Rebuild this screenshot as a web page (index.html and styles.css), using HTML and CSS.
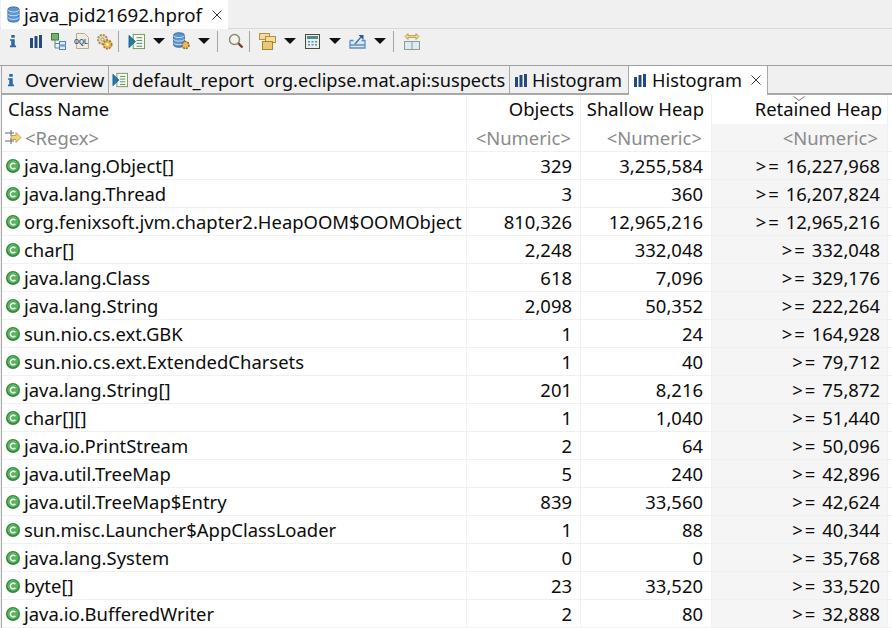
FILE: index.html
```html
<!DOCTYPE html>
<html lang="en">
<head>
    <meta charset="UTF-8">
    <meta name="viewport" content="width=device-width, initial-scale=1.0">
    <title>java_pid21692.hprof</title>
    <link rel="stylesheet" href="styles.css">
</head>
<body>
    <svg class="defs" width="0" height="0">
        <symbol id="i-info" viewBox="0 0 16 16">
            <path d="M6 1h4v3.200H6zM4.500 6h5.500v7.200h1.500V15h-7v-1.800H6V7.800H4.500z" fill="#2a6aa8"/>
        </symbol>
        <symbol id="i-bars" viewBox="0 0 12 13">
            <path d="M0 3h3v10H0zM4.500 1h3v12h-3zM9 0h3v13H9z" fill="#26497c"/>
        </symbol>
        <symbol id="i-class" viewBox="0 0 14 14">
            <circle cx="7" cy="7" r="7" fill="#2f8a3b"/>
            <circle cx="7" cy="6.600" r="5.600" fill="#57b45c"/>
            <path d="M9.300 5.200a2.800 2.800 0 1 0 0 3.600" fill="none" stroke="#fff" stroke-width="1.500"/>
        </symbol>
        <symbol id="i-report" viewBox="0 0 18 18">
            <rect x="5.500" y="1.500" width="12" height="15" fill="#f6fbef" stroke="#6d9a58"/>
            <path d="M9 5h6M9 8h6M9 11h6M9 14h6" stroke="#4d8a5c"/>
            <path d="M1 2.500l7 6.500-7 6.500z" fill="#1f7ea8" stroke="#174f78" stroke-width=".7"/>
        </symbol>
        <symbol id="i-db" viewBox="0 0 14 18">
            <path d="M1 3.500C1 0 13 0 13 3.500V14.500C13 18 1 18 1 14.500Z" fill="#5b94d0" stroke="#2f6299"/>
            <path d="M1 4c0 3 12 3 12 0M1 8c0 3 12 3 12 0M1 12c0 3 12 3 12 0" fill="none" stroke="#d5e6f7"/>
        </symbol>
        <symbol id="i-close" viewBox="0 0 10 10">
            <path d="M.5 .5l9 9M9.500 .5l-9 9" stroke="#333" fill="none"/>
        </symbol>
    </svg>

    <div class="editor-tabs">
        <div class="editor-tab">
            <svg width="13" height="17"><use href="#i-db"/></svg>
            <span>java_pid21692.hprof</span>
            <svg class="close" width="10" height="10"><use href="#i-close"/></svg>
        </div>
    </div>

    <div class="toolbar">
        <div class="slot"><svg width="14" height="16"><use href="#i-info"/></svg></div>
        <div class="slot"><svg width="12" height="13"><use href="#i-bars"/></svg></div>
        <div class="slot">
            <svg width="15" height="17" viewBox="0 0 15 17">
                <rect x=".5" y=".5" width="7" height="6.500" fill="#6fb46a" stroke="#3d7a3c"/>
                <path d="M4 7v8h4M4 10.500h4" fill="none" stroke="#6a7f96"/>
                <rect x="8.500" y="8.500" width="6" height="3.500" fill="#dcebf8" stroke="#4a84bd"/>
                <rect x="8.500" y="13" width="6" height="3.500" fill="#dcebf8" stroke="#4a84bd"/>
            </svg>
        </div>
        <div class="slot">
            <svg width="16" height="16" viewBox="0 0 16 16">
                <path d="M2.500 .5h8l4 4v11h-12z" fill="#f1ecdf" stroke="#b4aa90"/>
                <text class="oql" x="0" y="10.500">OQL</text>
            </svg>
        </div>
        <div class="slot">
            <svg width="17" height="17" viewBox="0 0 17 17">
                <circle cx="6.500" cy="6.500" r="4.500" fill="#e9dcb8" stroke="#a8905a" stroke-width="2" stroke-dasharray="2 1"/>
                <circle cx="6.500" cy="6.500" r="1.500" fill="#f6f1e1" stroke="#a8905a"/>
                <circle cx="11.500" cy="11.500" r="4.200" fill="#e9b95a" stroke="#b07a28" stroke-width="1.700" stroke-dasharray="2 1"/>
                <circle cx="11.500" cy="11.500" r="1.400" fill="#fff3d5"/>
            </svg>
        </div>
        <i class="sep"></i>
        <div class="slot"><svg width="17" height="17"><use href="#i-report"/></svg></div>
        <div class="arrow-slot"><i class="arrow"></i></div>
        <div class="slot">
            <svg width="19" height="18" viewBox="0 0 19 18">
                <svg width="14" height="16" viewBox="0 0 14 18"><use href="#i-db"/></svg>
                <circle cx="13.500" cy="13" r="3.500" fill="#e9b95a" stroke="#8b6a2a" stroke-width="1.500" stroke-dasharray="2 1"/>
            </svg>
        </div>
        <div class="arrow-slot"><i class="arrow"></i></div>
        <i class="sep"></i>
        <div class="slot">
            <svg width="16" height="16" viewBox="0 0 16 16">
                <path d="M10 10l4.500 4.500" stroke="#7a3c2a" stroke-width="2.400"/>
                <circle cx="6.500" cy="6.500" r="5" fill="#f4f4ee" stroke="#8b8b72" stroke-width="1.500"/>
            </svg>
        </div>
        <i class="sep"></i>
        <div class="slot">
            <svg width="17" height="17" viewBox="0 0 17 17">
                <rect x=".5" y=".5" width="10" height="6" fill="#f4dca0" stroke="#b3913f"/>
                <rect x="6.500" y="3.500" width="10" height="6" fill="#f4dca0" stroke="#b3913f"/>
                <rect x="3.500" y="8.500" width="10" height="8" fill="#ecc871" stroke="#a8852f"/>
            </svg>
        </div>
        <div class="arrow-slot"><i class="arrow"></i></div>
        <div class="slot">
            <svg width="15" height="15" viewBox="0 0 15 15">
                <rect x=".5" y=".5" width="14" height="14" fill="#e8efe8" stroke="#4b4b3c"/>
                <rect x="2" y="2" width="11" height="3" fill="#4f8a90"/>
                <path d="M3 7h2v1.500H3zM6.500 7h2v1.500h-2zM10 7h2v1.500h-2zM3 10h2v1.500H3zM6.500 10h2v1.500h-2zM10 10h2v1.500h-2z" fill="#5b8fbf"/>
            </svg>
        </div>
        <div class="arrow-slot"><i class="arrow"></i></div>
        <div class="slot">
            <svg width="17" height="16" viewBox="0 0 17 16">
                <path d="M1 7.500v7.500h15V7.500h-3.500M1 7.500h3.500M1.500 12h14" fill="#dce8f4" stroke="#5b8fc4" stroke-width="1.300"/>
                <path d="M6 11l6.500-7.500" stroke="#3e78b2" stroke-width="1.500"/>
                <path d="M9.500 2h5v5z" fill="#1e5d9c"/>
            </svg>
        </div>
        <div class="arrow-slot"><i class="arrow"></i></div>
        <i class="sep"></i>
        <div class="slot">
            <svg width="16" height="17" viewBox="0 0 16 17">
                <path d="M1 3.500l3-3v2h8v-2l3 3-3 3v-2H4v2z" fill="#f2d68f" stroke="#b3913f" stroke-width=".8"/>
                <rect x=".5" y="8.500" width="15" height="8" fill="#dcebf5" stroke="#8a9d92"/>
                <path d="M8 8v8" stroke="#8a9d92"/>
            </svg>
        </div>
    </div>

    <div class="view-tabs">
        <div class="view-tab tab-overview">
            <svg width="14" height="16"><use href="#i-info"/></svg>
            <span>Overview</span>
        </div>
        <div class="view-tab tab-report">
            <svg width="16" height="16"><use href="#i-report"/></svg>
            <span>default_report&nbsp; org.eclipse.mat.api:suspects</span>
        </div>
        <div class="view-tab tab-hist">
            <svg width="12" height="13"><use href="#i-bars"/></svg>
            <span>Histogram</span>
        </div>
        <div class="view-tab tab-active">
            <svg width="12" height="13"><use href="#i-bars"/></svg>
            <span>Histogram</span>
            <svg class="close" width="10" height="10"><use href="#i-close"/></svg>
        </div>
    </div>

    <div class="heap-table">
        <div class="row head">
            <div class="cell name">Class Name</div>
            <div class="cell">Objects</div>
            <div class="cell">Shallow Heap</div>
            <div class="cell">Retained Heap
                <svg class="sort-mark" width="12" height="5" viewBox="0 0 12 5"><path d="M.5 .5L6 4.500 11.500 .5" fill="none" stroke="#777"/></svg>
            </div>
        </div>
        <div class="row filter">
            <div class="cell name">
                <svg width="17" height="17" viewBox="0 0 17 17">
                    <path d="M0 4h9M0 12h9M6 1v6M6 9v6" stroke="#5f6b78"/>
                    <path d="M6 6.500h5V3.500l5 5-5 5v-3H6z" fill="#f0d684" stroke="#b8922f" stroke-width=".8"/>
                </svg>
                <span>&lt;Regex&gt;</span>
            </div>
            <div class="cell">&lt;Numeric&gt;</div>
            <div class="cell">&lt;Numeric&gt;</div>
            <div class="cell ret">&lt;Numeric&gt;</div>
        </div>
        <div class="row"><div class="cell name"><svg width="14" height="14"><use href="#i-class"/></svg>java.lang.Object[]</div><div class="cell">329</div><div class="cell">3,255,584</div><div class="cell ret"><span class="ge">&gt;=</span>16,227,968</div></div>
        <div class="row"><div class="cell name"><svg width="14" height="14"><use href="#i-class"/></svg>java.lang.Thread</div><div class="cell">3</div><div class="cell">360</div><div class="cell ret"><span class="ge">&gt;=</span>16,207,824</div></div>
        <div class="row"><div class="cell name"><svg width="14" height="14"><use href="#i-class"/></svg>org.fenixsoft.jvm.chapter2.HeapOOM$OOMObject</div><div class="cell">810,326</div><div class="cell">12,965,216</div><div class="cell ret"><span class="ge">&gt;=</span>12,965,216</div></div>
        <div class="row"><div class="cell name"><svg width="14" height="14"><use href="#i-class"/></svg>char[]</div><div class="cell">2,248</div><div class="cell">332,048</div><div class="cell ret"><span class="ge">&gt;=</span>332,048</div></div>
        <div class="row"><div class="cell name"><svg width="14" height="14"><use href="#i-class"/></svg>java.lang.Class</div><div class="cell">618</div><div class="cell">7,096</div><div class="cell ret"><span class="ge">&gt;=</span>329,176</div></div>
        <div class="row"><div class="cell name"><svg width="14" height="14"><use href="#i-class"/></svg>java.lang.String</div><div class="cell">2,098</div><div class="cell">50,352</div><div class="cell ret"><span class="ge">&gt;=</span>222,264</div></div>
        <div class="row"><div class="cell name"><svg width="14" height="14"><use href="#i-class"/></svg>sun.nio.cs.ext.GBK</div><div class="cell">1</div><div class="cell">24</div><div class="cell ret"><span class="ge">&gt;=</span>164,928</div></div>
        <div class="row"><div class="cell name"><svg width="14" height="14"><use href="#i-class"/></svg>sun.nio.cs.ext.ExtendedCharsets</div><div class="cell">1</div><div class="cell">40</div><div class="cell ret"><span class="ge">&gt;=</span>79,712</div></div>
        <div class="row"><div class="cell name"><svg width="14" height="14"><use href="#i-class"/></svg>java.lang.String[]</div><div class="cell">201</div><div class="cell">8,216</div><div class="cell ret"><span class="ge">&gt;=</span>75,872</div></div>
        <div class="row"><div class="cell name"><svg width="14" height="14"><use href="#i-class"/></svg>char[][]</div><div class="cell">1</div><div class="cell">1,040</div><div class="cell ret"><span class="ge">&gt;=</span>51,440</div></div>
        <div class="row"><div class="cell name"><svg width="14" height="14"><use href="#i-class"/></svg>java.io.PrintStream</div><div class="cell">2</div><div class="cell">64</div><div class="cell ret"><span class="ge">&gt;=</span>50,096</div></div>
        <div class="row"><div class="cell name"><svg width="14" height="14"><use href="#i-class"/></svg>java.util.TreeMap</div><div class="cell">5</div><div class="cell">240</div><div class="cell ret"><span class="ge">&gt;=</span>42,896</div></div>
        <div class="row"><div class="cell name"><svg width="14" height="14"><use href="#i-class"/></svg>java.util.TreeMap$Entry</div><div class="cell">839</div><div class="cell">33,560</div><div class="cell ret"><span class="ge">&gt;=</span>42,624</div></div>
        <div class="row"><div class="cell name"><svg width="14" height="14"><use href="#i-class"/></svg>sun.misc.Launcher$AppClassLoader</div><div class="cell">1</div><div class="cell">88</div><div class="cell ret"><span class="ge">&gt;=</span>40,344</div></div>
        <div class="row"><div class="cell name"><svg width="14" height="14"><use href="#i-class"/></svg>java.lang.System</div><div class="cell">0</div><div class="cell">0</div><div class="cell ret"><span class="ge">&gt;=</span>35,768</div></div>
        <div class="row"><div class="cell name"><svg width="14" height="14"><use href="#i-class"/></svg>byte[]</div><div class="cell">23</div><div class="cell">33,520</div><div class="cell ret"><span class="ge">&gt;=</span>33,520</div></div>
        <div class="row"><div class="cell name"><svg width="14" height="14"><use href="#i-class"/></svg>java.io.BufferedWriter</div><div class="cell">2</div><div class="cell">80</div><div class="cell ret"><span class="ge">&gt;=</span>32,888</div></div>
    </div>
</body>
</html>
```

FILE: styles.css
```css
html, body {
    height: 100%;
}

body {
    display: flex;
    flex-direction: column;
    margin: 0;
    overflow: hidden;
    background-color: #f0f0f0;
    color: #0c0c0c;
    font-family: "Noto Sans", "Open Sans", sans-serif;
    font-size: 18.2px;
    line-height: 24px;
}

svg {
    flex: none;
    display: block;
}

.defs {
    position: absolute;
}

.editor-tabs {
    flex: none;
    display: flex;
    height: 28px;
    border-bottom: 1px solid #d9d9d9;
}

.editor-tab {
    display: flex;
    align-items: center;
    gap: 4px;
    width: 227px;
    height: 29px;
    padding-left: 6px;
    margin-left: 1px;
    box-sizing: border-box;
    background-color: #fff;
    font-size: 18.7px;
}

.editor-tab .close {
    margin-left: 6px;
}

.toolbar {
    flex: none;
    display: flex;
    align-items: center;
    height: 24px;
    padding: 0 0 12px 1px;
    border-bottom: 1px solid #a0a0a0;
}

.slot {
    display: flex;
    justify-content: center;
    width: 23px;
}

.arrow-slot {
    display: flex;
    justify-content: center;
    width: 22px;
}

.oql {
    font-family: "Liberation Sans", sans-serif;
    font-size: 6.5px;
    font-weight: bold;
    fill: #2b4f7c;
}

.sep {
    width: 1px;
    height: 21px;
    margin: 0 6px 0 2px;
    background-color: #a5a5a5;
}

.arrow {
    width: 0;
    height: 0;
    border-left: 6px solid transparent;
    border-right: 6px solid transparent;
    border-top: 6px solid #111;
}

.view-tabs {
    flex: none;
    display: flex;
    height: 27px;
    margin-left: 1px;
    border-bottom: 2px solid #a8a8a8;
}

.view-tab {
    display: flex;
    align-items: center;
    height: 27px;
    padding-top: 1px;
    box-sizing: border-box;
    border-left: 1px solid #a8a8a8;
    gap: 5px;
}

.tab-overview {
    width: 107px;
    padding-left: 2px;
    gap: 7px;
}

.tab-report {
    width: 401px;
    padding-left: 3px;
    gap: 4px;
}

.tab-hist {
    width: 119px;
    padding-left: 5px;
}

.tab-active {
    width: 140px;
    height: 29px;
    padding-bottom: 2px;
    padding-left: 5px;
    gap: 6px;
    background-color: #fff;
    border-right: 1px solid #a8a8a8;
}

.tab-active .close {
    margin-left: 3px;
}

.heap-table {
    flex: 1;
    min-height: 0;
    overflow: hidden;
    margin-left: 1px;
    border-left: 1px solid #a8a8a8;
    background-color: #fff;
    font-size: 18.45px;
}

.row {
    display: grid;
    grid-template-columns: 465px 114px 131px 176px;
    height: 28px;
    box-sizing: border-box;
    border-bottom: 1px solid #f0f0f0;
}

.row > .cell:nth-child(2),
.row > .cell:nth-child(3) {
    padding-right: 8px;
}

.cell {
    display: flex;
    align-items: center;
    justify-content: flex-end;
    position: relative;
    padding: 0 7px 0 4px;
    border-right: 1px solid #eef1f6;
    white-space: nowrap;
}

.cell.name {
    justify-content: flex-start;
    gap: 4px;
    padding-left: 4px;
}

.ret {
    background-color: #f5f5f5;
}

.ge {
    margin-right: 5px;
    letter-spacing: 2px;
}

.head {
    height: 29px;
    border-bottom: none;
}

.head .cell {
    padding-bottom: 2px;
    padding-right: 5px;
}

.head > .cell:nth-child(2) {
    padding-right: 6px;
}

.head > .cell:nth-child(3) {
    padding-right: 7px;
}

.head .name {
    padding-left: 6px;
}

.sort-mark {
    position: absolute;
    top: 1px;
    right: 82px;
}

.filter .cell {
    padding-right: 9px;
    color: #8a8a8a;
}

.filter > .cell:nth-child(2),
.filter > .cell:nth-child(3) {
    padding-right: 9px;
}

.filter .name {
    gap: 3px;
    padding-left: 3px;
}
```
